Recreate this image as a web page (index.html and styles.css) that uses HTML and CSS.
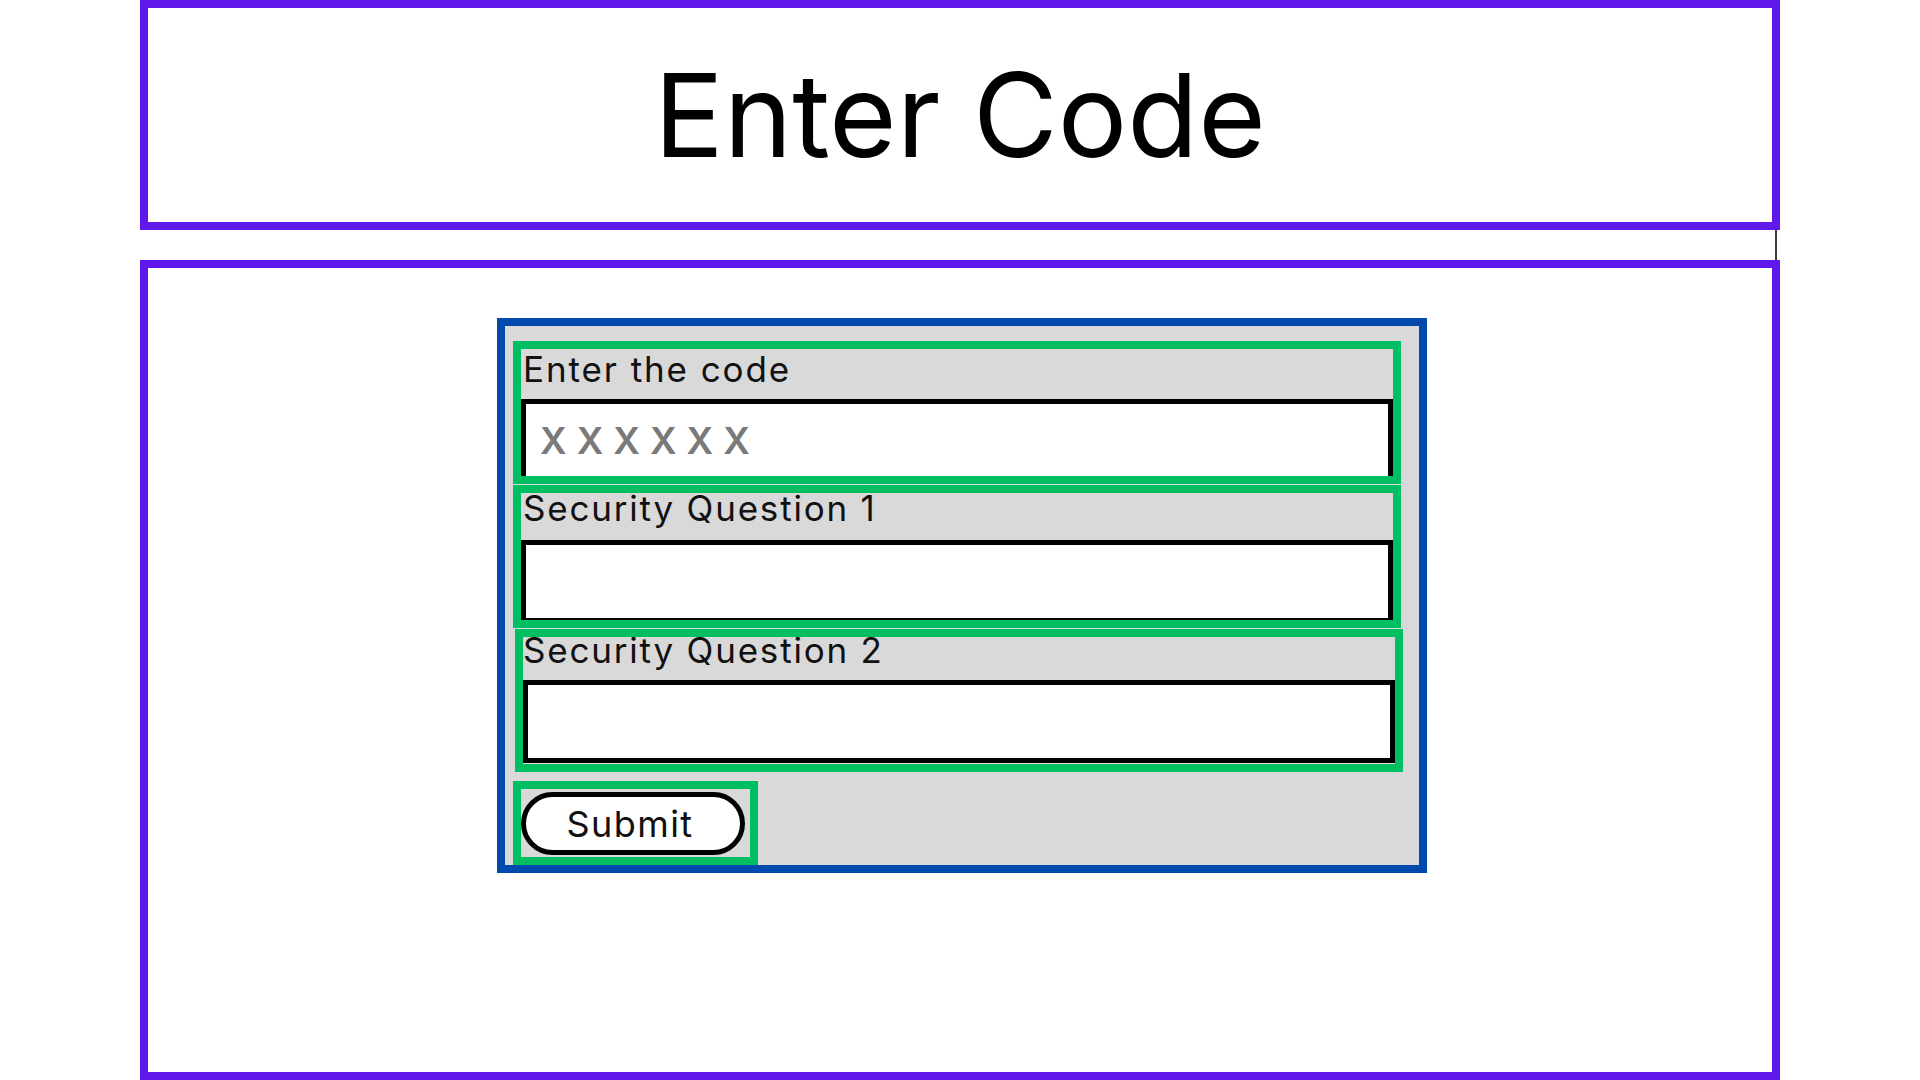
FILE: index.html
```html
<!DOCTYPE html>
<html lang="en">
<head>
<meta charset="utf-8">
<title>Enter Code</title>
<link rel="stylesheet" href="styles.css">
</head>
<body>
<div class="page">
  <header class="title-box">
    <h1 class="title">Enter Code</h1>
  </header>
  <div class="spacer"><span class="spacer-line"></span></div>
  <main class="main-box">
    <div class="form-wrap">
      <form class="code-form">
        <div class="field field--1">
          <label class="field-label" for="code">Enter the code</label>
          <input class="field-input field-input--code" id="code" type="text" placeholder="XXXXXX">
        </div>
        <div class="field field--2">
          <label class="field-label" for="q1">Security Question 1</label>
          <input class="field-input" id="q1" type="text">
        </div>
        <div class="field field--3">
          <label class="field-label" for="q2">Security Question 2</label>
          <input class="field-input" id="q2" type="text">
        </div>
        <div class="submit-box">
          <button class="submit-btn" type="button">Submit</button>
        </div>
      </form>
    </div>
  </main>
</div>
</body>
</html>
```
FILE: styles.css
```css
* { box-sizing: border-box; }
html, body { margin: 0; padding: 0; background: #ffffff; }
body { font-family: Inter, "Noto Sans", sans-serif; color: #000; }

.page {
  width: 1640px;
  margin: 0 auto;
  display: flex;
  flex-direction: column;
  height: 1080px;
}

.title-box {
  height: 230px;
  border: 8px solid #6119eb;
  display: flex;
  align-items: center;
  justify-content: center;
}
.title {
  margin: 0;
  font-size: 116px;
  font-weight: 400;
  line-height: 140px;
  color: #000;
}

.spacer {
  height: 30px;
  display: flex;
  justify-content: flex-end;
  padding-right: 3px;
}
.spacer-line {
  width: 2px;
  background: #3a3a3a;
}

.main-box {
  flex: 1;
  border: 8px solid #6119eb;
}
.form-wrap {
  display: flex;
  justify-content: center;
  padding-top: 50px;
  padding-left: 4px;
}

.code-form {
  width: 930px;
  border: 8px solid #004aad;
  background: #d9d9d9;
  padding: 15px 18px 0 8px;
  display: flex;
  flex-direction: column;
  align-items: flex-start;
}

.field {
  width: 888px;
  height: 143px;
  border: 8px solid #00bf63;
  background: #d9d9d9;
  overflow: hidden;
  margin-bottom: 1px;
}
.field--3 { margin-left: 2px; margin-bottom: 9px; }

.field-label {
  display: block;
  font-size: 35px;
  letter-spacing: 1.9px;
  line-height: 40px;
  height: 40px;
  padding-left: 2px;
  color: #111;
}
.field--2 .field-label { margin-top: -5px; letter-spacing: 1.8px; }
.field--3 .field-label { margin-top: -7px; padding-left: 0; letter-spacing: 1.8px; }

.field-input {
  display: block;
  width: 100%;
  height: 83px;
  margin: 10px 0 0;
  border: 5px solid #000;
  border-radius: 0;
  background: #fff;
  padding: 0 14px;
  font-family: Inter, "Noto Sans", sans-serif;
  font-size: 37px;
  font-weight: 600;
  letter-spacing: 10px;
  color: #000;
  outline: none;
}
.field--2 .field-input { margin-top: 12px; }
.field-input::placeholder { color: #7a7a7a; opacity: 1; font-weight: 600; }

.submit-box {
  border: 8px solid #00bf63;
  padding: 3px 5px 2px 0;
  height: 84px;
}
.submit-btn {
  display: block;
  width: 224px;
  height: 63px;
  border: 5px solid #000;
  border-radius: 999px;
  background: #fff;
  font-family: Inter, "Noto Sans", sans-serif;
  font-size: 36px;
  letter-spacing: 1.4px;
  color: #111;
  padding: 0 6px 0 0;
  cursor: pointer;
}
```
